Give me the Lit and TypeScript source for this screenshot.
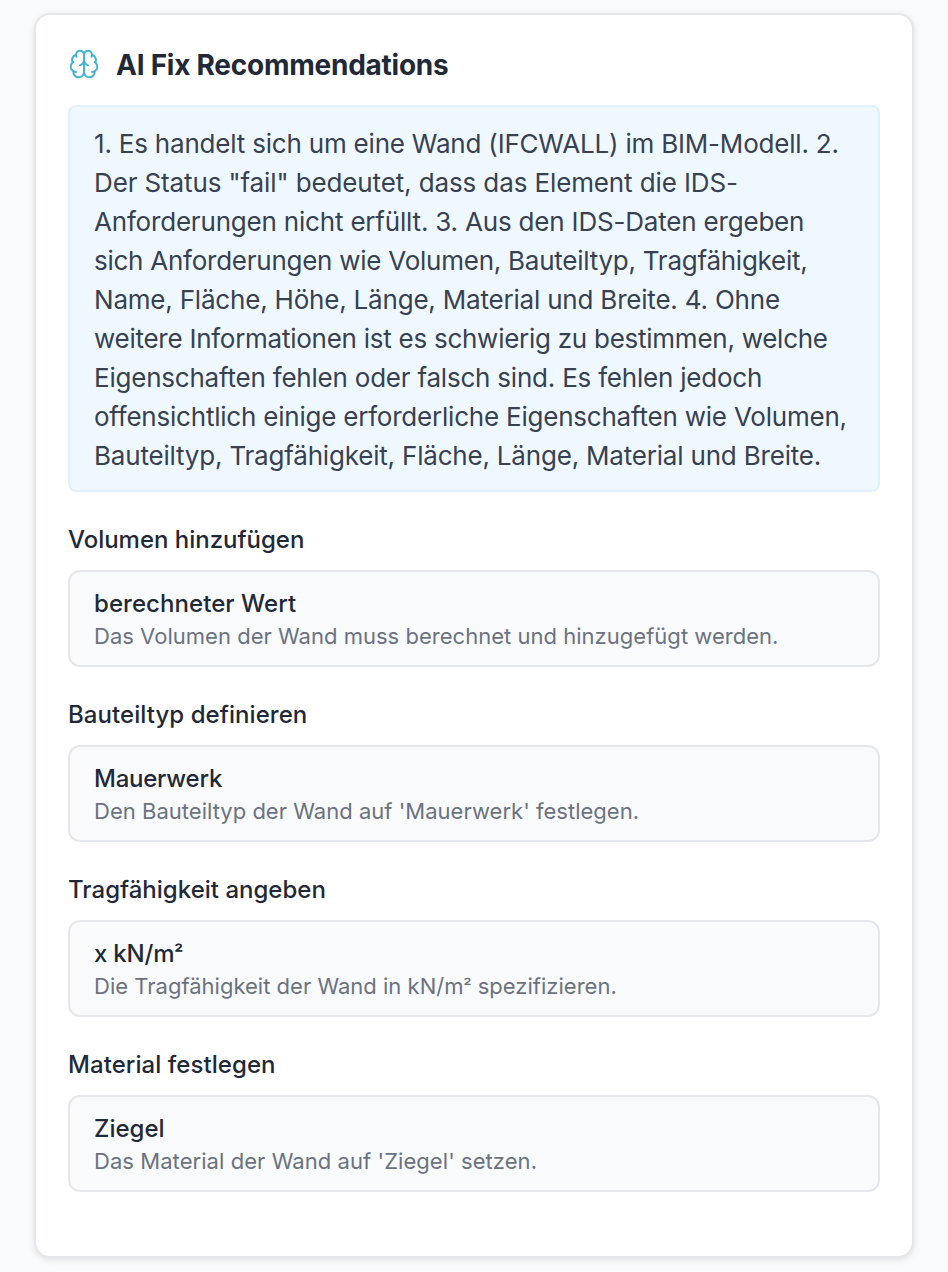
import { LitElement, html, css } from "lit";
import { customElement, property } from "lit/decorators.js";

interface Fix {
  heading: string;
  value: string;
  note: string;
  tracking: [number, number, number];
}

interface Line {
  text: string;
  tracking: number;
}

const SUMMARY: Line[] = [
  { text: "1. Es handelt sich um eine Wand (IFCWALL) im BIM-Modell. 2.", tracking: -0.2 },
  { text: 'Der Status "fail" bedeutet, dass das Element die IDS-', tracking: -0.12 },
  { text: "Anforderungen nicht erfüllt. 3. Aus den IDS-Daten ergeben", tracking: -0.19 },
  { text: "sich Anforderungen wie Volumen, Bauteiltyp, Tragfähigkeit,", tracking: -0.25 },
  { text: "Name, Fläche, Höhe, Länge, Material und Breite. 4. Ohne", tracking: -0.2 },
  { text: "weitere Informationen ist es schwierig zu bestimmen, welche", tracking: -0.26 },
  { text: "Eigenschaften fehlen oder falsch sind. Es fehlen jedoch", tracking: -0.215 },
  { text: "offensichtlich einige erforderliche Eigenschaften wie Volumen,", tracking: -0.215 },
  { text: "Bauteiltyp, Tragfähigkeit, Fläche, Länge, Material und Breite.", tracking: -0.195 },
];

const FIXES: Fix[] = [
  { heading: "Volumen hinzufügen", value: "berechneter Wert", note: "Das Volumen der Wand muss berechnet und hinzugefügt werden.", tracking: [-0.02, 0.06, 0.02] },
  { heading: "Bauteiltyp definieren", value: "Mauerwerk", note: "Den Bauteiltyp der Wand auf 'Mauerwerk' festlegen.", tracking: [0.06, -0.24, 0.02] },
  { heading: "Tragfähigkeit angeben", value: "x kN/m²", note: "Die Tragfähigkeit der Wand in kN/m² spezifizieren.", tracking: [0.01, -0.2, 0.01] },
  { heading: "Material festlegen", value: "Ziegel", note: "Das Material der Wand auf 'Ziegel' setzen.", tracking: [0.06, 0, 0.06] },
];

@customElement("fix-item")
export class FixItem extends LitElement {
  @property({ attribute: false }) fix!: Fix;

  static styles = css`
    :host { display: block; }
    .heading {
      margin: 0 0 12px;
      font-size: 24px;
      line-height: 36px;
      font-weight: 500;
      color: #1f2937;
    }
    .box {
      border: 2px solid #e5e7eb;
      border-radius: 12px;
      background: #f9fafb;
      padding: 14px 24px;
    }
    .value { margin: 0; font-size: 24px; line-height: 36px; font-weight: 500; color: #1f2937; }
    .note { margin: 0; font-size: 22px; line-height: 29px; color: #6b7280; }
    .power { font-size: 0.82em; line-height: 0; vertical-align: 0.08em; font-weight: 600; }
    .note .power { font-weight: 500; }
  `;

  private withPower(text: string) {
    const [before, after] = text.split("²");
    return after === undefined ? text : html`${before}<span class="power">²</span>${after}`;
  }

  render() {
    const [h, v, n] = this.fix.tracking;
    return html`
      <h3 class="heading" style="letter-spacing:${h}px">${this.fix.heading}</h3>
      <div class="box">
        <p class="value" style="letter-spacing:${v}px">${this.withPower(this.fix.value)}</p>
        <p class="note" style="letter-spacing:${n}px">${this.withPower(this.fix.note)}</p>
      </div>
    `;
  }
}

@customElement("app-root")
export class AppRoot extends LitElement {
  static styles = css`
    :host {
      display: block;
      box-sizing: border-box;
      height: 1272px;
      padding: 13px 34px 14px;
      background: #f9fafb;
      font-family: Inter, "Liberation Sans", sans-serif;
      overflow: hidden;
    }
    .card {
      box-sizing: border-box;
      height: 1245px;
      padding: 32px;
      border: 2px solid #e5e7eb;
      border-radius: 16px;
      background: #fff;
      box-shadow: 0 2px 6px rgba(0, 0, 0, 0.1);
    }
    .head { display: flex; align-items: flex-start; gap: 16px; height: 36px; margin-bottom: 22px; }
    .icon { width: 32px; height: 32px; margin-top: 1px; color: #45b3d4; }
    .title {
      margin: 0;
      font-size: 28px;
      line-height: 37px;
      font-weight: 700;
      letter-spacing: -0.25px;
      color: #1f2937;
    }
    .summary {
      margin: 0;
      padding: 17px 24px 15px;
      border: 2px solid #e0f0fd;
      border-radius: 8px;
      background: #f0f8ff;
      font-size: 26px;
      line-height: 39px;
      color: #374151;
    }
    .line { display: block; white-space: nowrap; }
    .list { display: grid; gap: 30px; margin-top: 30px; }
  `;

  render() {
    return html`
      <section class="card">
        <header class="head">
          <svg class="icon" viewBox="0 0 24 24" fill="none" stroke="currentColor" stroke-width="1.5" stroke-linecap="round" stroke-linejoin="round">
            <path d="M12 5a3 3 0 1 0-5.997.125 4 4 0 0 0-2.526 5.77 4 4 0 0 0 .556 6.588A4 4 0 1 0 12 18Z" />
            <path d="M12 5a3 3 0 1 1 5.997.125 4 4 0 0 1 2.526 5.77 4 4 0 0 1-.556 6.588A4 4 0 1 1 12 18Z" />
            <path d="M15 13a4.5 4.5 0 0 1-3-4 4.5 4.5 0 0 1-3 4" />
            <path d="M17.599 6.5a3 3 0 0 0 .399-1.375" />
            <path d="M6.003 5.125A3 3 0 0 0 6.401 6.5" />
            <path d="M3.477 10.896a4 4 0 0 1 .585-.396" />
            <path d="M19.938 10.5a4 4 0 0 1 .585.396" />
            <path d="M6 18a4 4 0 0 1-1.967-.516" />
            <path d="M19.967 17.484A4 4 0 0 1 18 18" />
          </svg>
          <h2 class="title">AI Fix Recommendations</h2>
        </header>
        <p class="summary">
          ${SUMMARY.map((l) => html`<span class="line" style="letter-spacing:${l.tracking}px">${l.text}</span>`)}
        </p>
        <div class="list">
          ${FIXES.map((fix) => html`<fix-item .fix=${fix}></fix-item>`)}
        </div>
      </section>
    `;
  }
}
